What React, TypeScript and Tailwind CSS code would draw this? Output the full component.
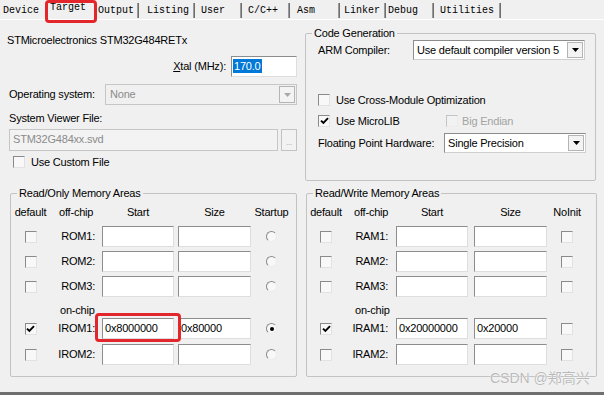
import React from "react";

type Tab = { label: string; w: string; pl: string; active?: boolean; sep?: boolean };

const tabs: Tab[] = [
  { label: "Device", w: "w-[44px]", pl: "pl-[3px]" },
  { label: "Target", w: "w-[52px]", pl: "pl-[6px]", active: true },
  { label: "Output", w: "w-[43px]", pl: "pl-[2px]", sep: true },
  { label: "Listing", w: "w-[56px]", pl: "pl-[8px]", sep: true },
  { label: "User", w: "w-[47px]", pl: "pl-[6px]", sep: true },
  { label: "C/C++", w: "w-[48px]", pl: "pl-[6px]", sep: true },
  { label: "Asm", w: "w-[50px]", pl: "pl-[7px]", sep: true },
  { label: "Linker", w: "w-[46px]", pl: "pl-[4px]", sep: true },
  { label: "Debug", w: "w-[48px]", pl: "pl-[2px]", sep: true },
  { label: "Utilities", w: "w-[67px]", pl: "pl-[6px]", sep: true },
];

function Check({ checked, disabled }: { checked?: boolean; disabled?: boolean }) {
  return (
    <div
      className={
        disabled
          ? "w-[12px] h-[12px] shrink-0 border border-t-[#c4c4c4] border-l-[#c4c4c4] border-r-[#ececec] border-b-[#ececec] bg-[#f2f2f2]"
          : "w-[12px] h-[12px] shrink-0 border border-t-[#8a8a8a] border-l-[#8a8a8a] border-r-[#e2e2e2] border-b-[#e2e2e2] bg-[#f8f8f8] flex items-center justify-center"
      }
    >
      {checked && (
        <svg width="9" height="8" viewBox="0 0 9 8">
          <path d="M1 3.6 L3.4 6 L8 1.2" fill="none" stroke="#000" strokeWidth="1.9" />
        </svg>
      )}
    </div>
  );
}

function Radio({ checked }: { checked?: boolean }) {
  return (
    <div className="w-[11px] h-[11px] rounded-full border border-t-[#8a8a8a] border-l-[#8a8a8a] border-r-[#ececec] border-b-[#ececec] bg-[#f8f8f8] flex items-center justify-center">
      {checked && <div className="w-[4px] h-[4px] rounded-full bg-black" />}
    </div>
  );
}

function Field({ value, w }: { value?: string; w: string }) {
  return (
    <div
      className={`${w} h-[21px] border border-t-[#8d8d8d] border-l-[#8d8d8d] border-r-[#dedede] border-b-[#dedede] bg-white pl-[2px] leading-[18px] text-black`}
    >
      {value}
    </div>
  );
}

function Arrow({ muted }: { muted?: boolean }) {
  return (
    <div className="w-[16px] h-full border border-[#b4b4b4] bg-[#f3f3f3] flex items-center justify-center">
      <svg width="7" height="4" viewBox="0 0 7 4">
        <path d="M0 0 H7 L3.5 4 Z" fill={muted ? "#a8a8a8" : "#000"} />
      </svg>
    </div>
  );
}

function Select({ value, w, disabled }: { value: string; w: string; disabled?: boolean }) {
  return (
    <div
      className={
        disabled
          ? `${w} h-[21px] border border-[#c6c6c6] bg-[#f0f0f0] flex items-stretch p-[1px]`
          : `${w} h-[20px] border border-t-[#8d8d8d] border-l-[#8d8d8d] border-r-[#cfcfcf] border-b-[#cfcfcf] bg-white flex items-stretch p-[1px]`
      }
    >
      <div className={disabled ? "flex-1 pl-[3px] text-[#8b8b8b] flex items-center" : "flex-1 pl-[2px] flex items-center"}>
        {value}
      </div>
      <Arrow muted={disabled} />
    </div>
  );
}

type Cfg = { c1: string; c2: string; lblPr: string; c3: string; gap: string; c4: string; c5: string };

type MemRow = { label: string; start?: string; size?: string; def?: boolean; last?: boolean; mark?: boolean };

function MemBox({
  title,
  cfg,
  rows,
  chip,
  lastHead,
  radio,
  cls,
}: {
  title: string;
  cfg: Cfg;
  rows: MemRow[];
  chip: MemRow[];
  lastHead: string;
  radio?: boolean;
  cls: string;
}) {
  const row = (r: MemRow, mt: string) => (
    <div key={r.label} className={`flex items-center h-[21px] ${mt}`}>
      <div className={`${cfg.c1} flex justify-center`}>
        <Check checked={r.def} />
      </div>
      <div className={`${cfg.c2} text-right ${cfg.lblPr}`}>{r.label}</div>
      <div className={`${cfg.c3} relative`}>
        <Field value={r.start} w={cfg.c3} />
        {r.mark && (
          <div className="absolute left-[-7px] top-[-5px] w-[86px] h-[29px] border-[3px] border-[#e3262b] rounded-[4px]" />
        )}
      </div>
      <div className={cfg.gap}>
        <Field value={r.size} w={cfg.c4} />
      </div>
      <div className={`${cfg.c5} flex justify-center`}>{radio ? <Radio checked={r.last} /> : <Check />}</div>
    </div>
  );
  return (
    <fieldset className={`${cls} h-[190px] border border-[#c3c3c3] rounded-[2px] flex flex-col`}>
      <legend className="ml-[6px] px-[2px] leading-[12px]">{title}</legend>
      <div className="flex items-center h-[12px] mt-[7px] leading-[12px]">
        <div className={`${cfg.c1} text-center`}>default</div>
        <div className={`${cfg.c2} pl-[9px]`}>off-chip</div>
        <div className={`${cfg.c3} text-center`}>Start</div>
        <div className={`${cfg.gap} ${cfg.c4} text-center`}>Size</div>
        <div className={`${cfg.c5} text-center`}>{lastHead}</div>
      </div>
      {row(rows[0], "mt-[8px]")}
      {row(rows[1], "mt-[4px]")}
      {row(rows[2], "mt-[4px]")}
      <div className="flex h-[12px] mt-[7px] leading-[12px]">
        <div className={cfg.c1} />
        <div className="pl-[10px]">on-chip</div>
      </div>
      {row(chip[0], "mt-[2px]")}
      {row(chip[1], "mt-[5px]")}
    </fieldset>
  );
}

export default function App() {
  return (
    <div
      className="relative w-[604px] h-[395px] overflow-hidden bg-[#f0f0f0] flex flex-col text-[11px] tracking-[-0.2px] text-black"
      style={{ fontFamily: '"Liberation Sans", Arial, sans-serif' }}
    >
      {/* tabs */}
      <div className="flex h-[20px] border-b border-white">
        {tabs.map((t) => (
          <div key={t.label} className={`${t.w} ${t.pl} relative flex h-full`}>
            <span
              className={
                t.active
                  ? "pt-[2px] leading-[12px] text-[10px] tracking-normal"
                  : "pt-[5px] leading-[12px] text-[10px] tracking-normal"
              }
              style={{ fontFamily: '"Liberation Mono", "Courier New", monospace' }}
            >
              {t.label}
            </span>
            {t.sep && <div className="ml-auto mt-[3px] w-[2px] h-[15px] bg-[#6e6e6e] border-l border-[#9a9a9a]" />}
            {t.active && (
              <div className="absolute left-[1px] top-0 w-[52px] h-[23px] border-[3px] border-[#e3262b] rounded-[4px]" />
            )}
          </div>
        ))}
      </div>

      {/* top section */}
      <div className="flex h-[161px] items-start">
        <div className="w-[300px] flex flex-col">
          <div className="mt-[14px] h-[12px] leading-[12px] pl-[7px]">STMicroelectronics STM32G484RETx</div>
          <div className="mt-[10px] h-[21px] flex items-center justify-end pr-[3px]">
            <span className="mr-[5px]">
              <span className="underline">X</span>tal (MHz):
            </span>
            <div className="w-[66px] h-[21px] border border-t-[#8d8d8d] border-l-[#8d8d8d] border-r-[#dedede] border-b-[#dedede] bg-white pt-[1px] pl-[1px]">
              <span className="inline-block bg-[#0078d7] text-white leading-[14px] px-[1px]">170.0</span>
            </div>
          </div>
          <div className="mt-[7px] h-[21px] flex items-center pl-[9px]">
            <div className="w-[96px]">Operating system:</div>
            <Select value="None" w="w-[192px]" disabled />
          </div>
          <div className="mt-[7px] h-[12px] leading-[12px] pl-[9px]">System Viewer File:</div>
          <div className="mt-[5px] h-[22px] flex pl-[9px]">
            <div className="w-[269px] h-[22px] border border-[#c6c6c6] bg-[#f3f3f3] pl-[3px] leading-[19px] text-[#8b8b8b]">
              STM32G484xx.svd
            </div>
            <div className="ml-[3px] w-[16px] h-[22px] border border-[#c2c2c2] bg-[#f2f2f2] flex items-end justify-center pb-[3px]">
              <span className="text-[#a0a0a0] text-[8px] leading-[8px]">...</span>
            </div>
          </div>
          <div className="mt-[5px] h-[12px] flex items-center pl-[13px]">
            <Check />
            <span className="ml-[6px] leading-[12px]">Use Custom File</span>
          </div>
        </div>

        <fieldset className="ml-[5px] mt-[7px] w-[291px] h-[154px] border border-[#c3c3c3] rounded-[2px] flex flex-col">
          <legend className="ml-[6px] px-[2px] leading-[12px]">Code Generation</legend>
          <div className="mt-[1px] h-[20px] flex items-center pl-[12px]">
            <div className="w-[95px]">ARM Compiler:</div>
            <Select value="Use default compiler version 5" w="w-[172px]" />
          </div>
          <div className="mt-[34px] h-[12px] flex items-center pl-[12px]">
            <Check />
            <span className="ml-[6px] leading-[12px]">Use Cross-Module Optimization</span>
          </div>
          <div className="mt-[9px] h-[12px] flex items-center pl-[12px]">
            <Check checked />
            <span className="ml-[6px] leading-[12px] w-[110px]">Use MicroLIB</span>
            <Check disabled />
            <span className="ml-[4px] leading-[12px] text-[#a3a3a3]">Big Endian</span>
          </div>
          <div className="mt-[6px] h-[20px] flex items-center pl-[12px]">
            <div className="w-[126px]">Floating Point Hardware:</div>
            <Select value="Single Precision" w="w-[142px]" />
          </div>
        </fieldset>
      </div>

      {/* memory areas */}
      <div className="mt-[6px] flex items-start">
        <MemBox
          cls="ml-[10px] w-[287px]"
          title="Read/Only Memory Areas"
          lastHead="Startup"
          radio
          cfg={{
            c1: "w-[39px]",
            c2: "w-[52px]",
            lblPr: "pr-[7px]",
            c3: "w-[72px]",
            gap: "ml-[4px]",
            c4: "w-[73px]",
            c5: "w-[41px]",
          }}
          rows={[{ label: "ROM1:" }, { label: "ROM2:" }, { label: "ROM3:" }]}
          chip={[
            { label: "IROM1:", start: "0x8000000", size: "0x80000", def: true, last: true, mark: true },
            { label: "IROM2:" },
          ]}
        />
        <MemBox
          cls="ml-[9px] w-[291px]"
          title="Read/Write Memory Areas"
          lastHead="NoInit"
          cfg={{
            c1: "w-[38px]",
            c2: "w-[51px]",
            lblPr: "pr-[8px]",
            c3: "w-[72px]",
            gap: "ml-[6px]",
            c4: "w-[73px]",
            c5: "w-[40px]",
          }}
          rows={[{ label: "RAM1:" }, { label: "RAM2:" }, { label: "RAM3:" }]}
          chip={[
            { label: "IRAM1:", start: "0x20000000", size: "0x20000", def: true },
            { label: "IRAM2:" },
          ]}
        />
      </div>

      <div className="mt-auto h-[3px] bg-[#6f6f6f]" />

      {/* watermark */}
      <div
        className="absolute left-[490px] top-[369px] text-[14px] leading-[18px] tracking-normal text-[#b9b9b9]"
        style={{
          fontFamily: '"Liberation Sans", "Noto Sans CJK SC", sans-serif',
          textShadow: "0 0 1px #fff, 0 0 1px #fff",
        }}
      >
        CSDN @郑高兴
      </div>
    </div>
  );
}
